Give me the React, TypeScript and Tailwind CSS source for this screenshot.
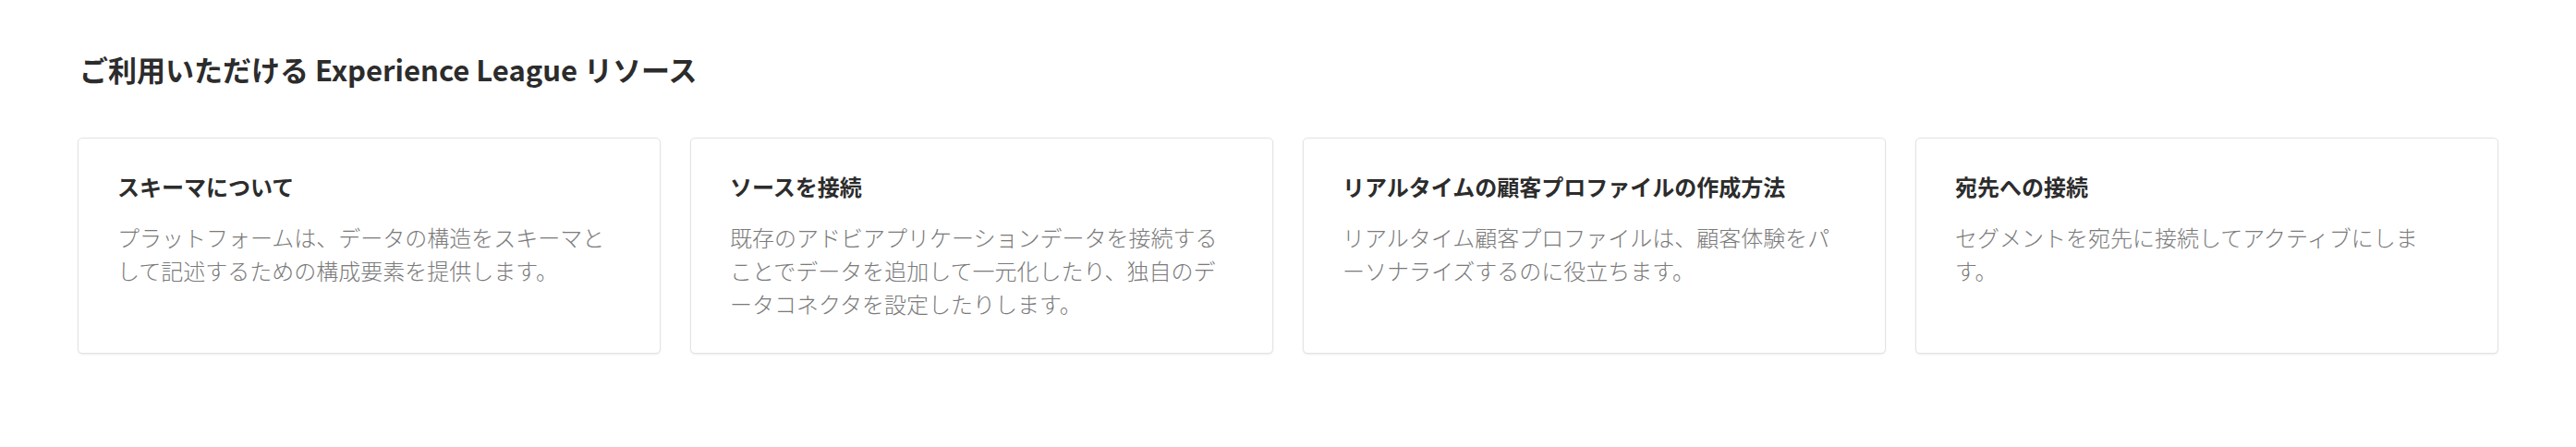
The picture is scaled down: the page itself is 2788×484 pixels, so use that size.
import React from 'react';

type Resource = {
  title: string;
  body: string;
};

const resources: Resource[] = [
  {
    title: 'スキーマについて',
    body: 'プラットフォームは、データの構造をスキーマとして記述するための構成要素を提供します。',
  },
  {
    title: 'ソースを接続',
    body: '既存のアドビアプリケーションデータを接続することでデータを追加して一元化したり、独自のデータコネクタを設定したりします。',
  },
  {
    title: 'リアルタイムの顧客プロファイルの作成方法',
    body: 'リアルタイム顧客プロファイルは、顧客体験をパーソナライズするのに役立ちます。',
  },
  {
    title: '宛先への接続',
    body: 'セグメントを宛先に接続してアクティブにします。',
  },
];

const ResourceCard: React.FC<{ item: Resource }> = ({ item }) => (
  <div className="bg-white rounded-[5px] border border-[#e3e3e3] shadow-[0_1px_2px_rgba(0,0,0,0.08)] h-[234px] pl-[42px] pr-[42px] pt-[37px]">
    <h3 className="text-[24px] leading-[30px] font-bold text-[#2c2c2c]">{item.title}</h3>
    <p className="mt-[22px] text-[24px] leading-[36px] font-light text-[#7a7a7a]">{item.body}</p>
  </div>
);

export default function App() {
  return (
    <div
      className="w-[2788px] h-[484px] bg-white px-[84px] pt-[55px]"
      style={{ fontFamily: '"Noto Sans CJK JP", "Noto Sans", sans-serif' }}
    >
      {/* Heading */}
      <h2 className="text-[31px] leading-[40px] font-semibold text-[#2c2c2c] pl-[2px]">
        ご利用いただける Experience League リソース
      </h2>

      {/* Cards */}
      <div className="mt-[54px] grid grid-cols-4 gap-[32px]">
        {resources.map((r) => (
          <ResourceCard key={r.title} item={r} />
        ))}
      </div>
    </div>
  );
}
